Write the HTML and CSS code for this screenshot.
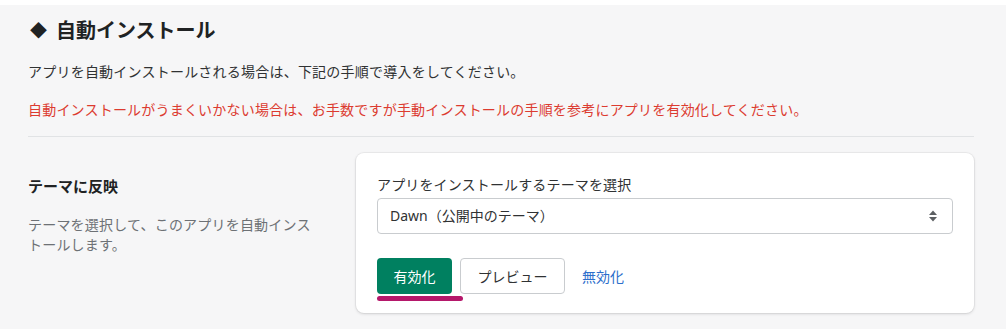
FILE: index.html
```html
<!DOCTYPE html>
<html lang="ja">
<head>
<meta charset="utf-8">
<title>自動インストール</title>
<link rel="stylesheet" href="styles.css">
</head>
<body>
<div class="topbar"></div>
<main class="page">
  <h2 class="title"><span class="diamond">◆</span>自動インストール</h2>
  <p class="lead">アプリを自動インストールされる場合は、下記の手順で導入をしてください。</p>
  <p class="warn">自動インストールがうまくいかない場合は、お手数ですが手動インストールの手順を参考にアプリを有効化してください。</p>
  <hr class="divider">
  <section class="row">
    <div class="aside">
      <h3 class="aside-title">テーマに反映</h3>
      <p class="aside-desc">テーマを選択して、このアプリを自動インストールします。</p>
    </div>
    <div class="card">
      <label class="label">アプリをインストールするテーマを選択</label>
      <div class="select">
        <span class="select-text">Dawn（公開中のテーマ）</span>
        <svg class="select-arrow" width="10" height="14" viewBox="0 0 10 14">
          <path d="M5 1.5 L9 6 H1 Z" fill="#5c5f62"/>
          <path d="M5 12.5 L9 8 H1 Z" fill="#5c5f62"/>
        </svg>
      </div>
      <div class="actions">
        <button class="btn btn-primary">有効化</button>
        <button class="btn btn-secondary">プレビュー</button>
        <a class="btn-link" href="#">無効化</a>
      </div>
      <div class="highlight"></div>
    </div>
  </section>
</main>
</body>
</html>
```

FILE: styles.css
```css
html, body {
  margin: 0;
  padding: 0;
  background: #ffffff;
}
body {
  font-family: "Noto Sans", "Noto Sans CJK JP", sans-serif;
  color: #202223;
  font-size: 14px;
}
.topbar {
  height: 5px;
  background: #ffffff;
}
.page {
  background: #f6f6f7;
  padding: 11px 32px 14px 28px;
  height: 324px;
  box-sizing: border-box;
}
.title {
  margin: 0;
  font-size: 20px;
  line-height: 30px;
  font-weight: 700;
  color: #202223;
  display: flex;
  align-items: center;
}
.diamond {
  font-size: 17px;
  margin: 0 9px 0 2px;
}
.lead {
  margin: 15px 0 0;
  line-height: 22px;
  color: #303233;
  letter-spacing: 0.22px;
}
.warn {
  margin: 16px 0 0;
  line-height: 22px;
  color: #dc3b30;
  letter-spacing: 0.2px;
}
.divider {
  margin: 15px 0 0;
  border: 0;
  border-top: 1px solid #e1e3e5;
  height: 0;
}
.row {
  display: flex;
  gap: 28px;
  margin-top: 16px;
  align-items: flex-start;
}
.aside {
  width: 300px;
  padding-top: 21px;
}
.aside-title {
  margin: 0;
  font-size: 15px;
  line-height: 24px;
  font-weight: 700;
}
.aside-desc {
  margin: 17px 0 0;
  color: #6d7175;
  line-height: 20px;
  width: 292px;
  letter-spacing: 0.2px;
}
.card {
  flex: 1;
  background: #ffffff;
  border-radius: 8px;
  box-shadow: 0 0 0 1px rgba(63, 63, 68, 0.05), 0 1px 3px rgba(63, 63, 68, 0.18);
  padding: 22px 21px 12px 21px;
  display: flex;
  flex-direction: column;
}
.label {
  line-height: 20px;
  color: #303233;
  letter-spacing: 0.15px;
}
.select {
  margin-top: 3px;
  height: 36px;
  box-sizing: border-box;
  border: 1px solid #c9cccf;
  border-radius: 4px;
  display: flex;
  align-items: center;
  justify-content: space-between;
  padding: 0 14px 0 12px;
}
.select-text {
  line-height: 20px;
  color: #303233;
}
.select-arrow {
  display: block;
}
.actions {
  margin-top: 24px;
  display: flex;
  align-items: center;
  gap: 8px;
}
.btn {
  height: 36px;
  box-sizing: border-box;
  border-radius: 4px;
  font-family: inherit;
  font-size: 14px;
  padding: 0 16px;
  cursor: pointer;
}
.btn-primary {
  background: #008060;
  color: #ffffff;
  border: 0;
  width: 75px;
}
.btn-secondary {
  background: #ffffff;
  color: #303233;
  border: 1px solid #c9cccf;
  width: 105px;
}
.btn-link {
  color: #2c6ecb;
  text-decoration: none;
  margin-left: 9px;
}
.highlight {
  margin-top: 2px;
  width: 86px;
  height: 5px;
  border-radius: 3px;
  background: #b5186b;
}
```
